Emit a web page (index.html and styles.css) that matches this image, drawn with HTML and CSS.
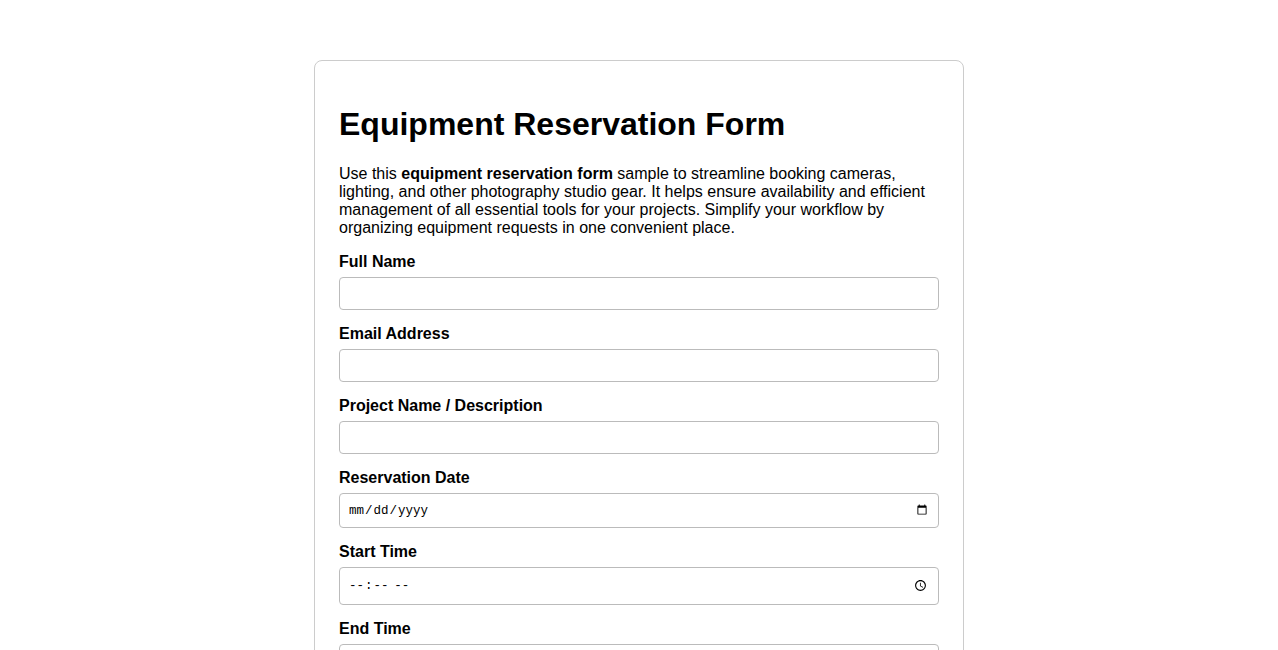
FILE: index.html
```html
<!DOCTYPE html>
<html lang="en">
<head>
  <meta charset="UTF-8">
  <title>Equipment Reservation Form</title>
  <link rel="stylesheet" href="styles.css">
</head>
<body>
  <form class="form-card">
    <h1>Equipment Reservation Form</h1>
    <p class="intro">Use this <strong>equipment reservation form</strong> sample to streamline booking cameras, lighting, and other photography studio gear. It helps ensure availability and efficient management of all essential tools for your projects. Simplify your workflow by organizing equipment requests in one convenient place.</p>

    <label for="fullName">Full Name</label>
    <input type="text" id="fullName">

    <label for="email">Email Address</label>
    <input type="email" id="email">

    <label for="project">Project Name / Description</label>
    <input type="text" id="project">

    <label for="resDate">Reservation Date</label>
    <input type="date" id="resDate">

    <label for="startTime">Start Time</label>
    <input type="time" id="startTime">

    <label for="endTime">End Time</label>
    <input type="time" id="endTime">
  </form>
</body>
</html>
```

FILE: styles.css
```css
body { font-family: "Liberation Sans", Arial, sans-serif; margin: 0; padding: 60px 0 40px; background-color: #fff; color: #000; }
.form-card { box-sizing: border-box; width: 650px; margin: 0 auto; padding: 24px; border: 1px solid #ccc; border-radius: 8px; }
h1 { font-size: 32px; margin: 21px 0 22px; line-height: 37px; }
.intro { font-size: 16px; line-height: 18px; margin: 0 0 16px; }
label { display: block; font-weight: bold; font-size: 16px; line-height: 18px; margin-bottom: 6px; }
input { display: block; box-sizing: border-box; width: 100%; height: 33px; padding: 8px; margin: 0 0 15px; border: 1px solid #bbb; border-radius: 4px; background: #fff; font-family: "Liberation Mono", monospace; font-size: 12.5px; }
input[type="date"] { height: 35px; }
input[type="time"] { height: 38px; }
```
